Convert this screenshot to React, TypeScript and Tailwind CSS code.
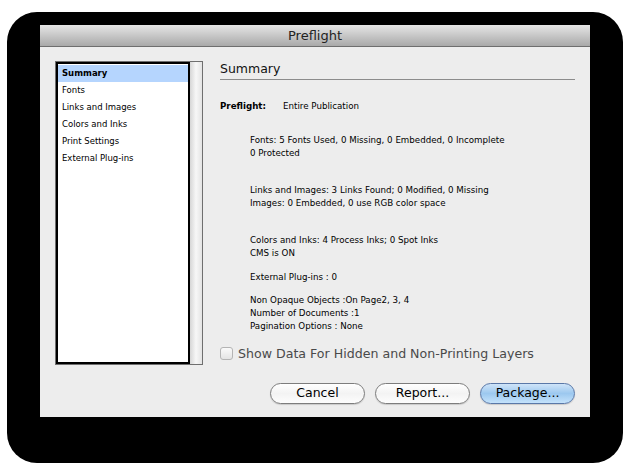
import React from 'react';

const listItems = ['Summary', 'Fonts', 'Links and Images', 'Colors and Inks', 'Print Settings', 'External Plug-ins'];

const font = { fontFamily: '"DejaVu Sans", "Liberation Sans", sans-serif' };

const Button: React.FC<{ label: string; primary?: boolean }> = ({ label, primary }) => (
  <button
    className={`w-[95px] h-[21px] rounded-full border text-[12.5px] leading-none text-black ${
      primary
        ? 'border-[#5a78a8] bg-gradient-to-b from-[#cfe4f8] via-[#9cc8ef] to-[#c4e2fb]'
        : 'border-[#7d7d7d] bg-gradient-to-b from-white via-[#f3f3f3] to-[#fdfdfd]'
    } shadow-[0_1px_1px_rgba(0,0,0,0.15)]`}
  >
    {label}
  </button>
);

export default function App() {
  return (
    <div className="w-[630px] h-[472px] bg-white pt-[12px] pl-[7px]" style={font}>
      <div className="w-[616px] h-[451px] rounded-[30px] bg-black pt-[13px] pl-[33px]">
        <div className="w-[550px] h-[392px] bg-[#ededed] flex flex-col">
          {/* title bar */}
          <div className="h-[22px] bg-gradient-to-b from-[#e6e6e6] to-[#a9a9a9] border-b border-[#6e6e6e] flex items-center justify-center text-[13px] text-[#222]">
            Preflight
          </div>

          <div className="flex pt-[14px] pl-[15px]">
            {/* list */}
            <div className="w-[148px] h-[304px] border border-[#6f6f6f] flex bg-white">
              <div className="w-[134px] h-full border-2 border-black bg-white flex flex-col pt-px">
                {listItems.map((item, i) => (
                  <div
                    key={item}
                    className={`h-[17px] pl-[4px] flex items-center text-[8.5px] text-black ${
                      i === 0 ? 'bg-[#b5d5fe] font-bold' : ''
                    }`}
                  >
                    {item}
                  </div>
                ))}
              </div>
              <div className="flex-1 bg-gradient-to-r from-[#d6d6d6] via-[#f7f7f7] to-[#e4e4e4]" />
            </div>

            {/* details */}
            <div className="ml-[17px] w-[355px] flex flex-col">
              <div className="text-[12.5px] text-[#111] leading-none pt-[2px] pb-[3px] border-b border-[#8c8c8c]">
                Summary
              </div>
              <div className="flex text-[8.7px] text-black mt-[20px]">
                <span className="font-bold w-[63px]">Preflight:</span>
                <span>Entire Publication</span>
              </div>
              <div className="pl-[30px] text-[8.7px] text-black leading-[13px]">
                <div className="mt-[21px]">
                  <div>Fonts: 5 Fonts Used, 0 Missing, 0 Embedded, 0 Incomplete</div>
                  <div>0 Protected</div>
                </div>
                <div className="mt-[24px]">
                  <div>Links and Images: 3 Links Found; 0 Modified, 0 Missing</div>
                  <div>Images: 0 Embedded, 0 use RGB color space</div>
                </div>
                <div className="mt-[24px]">
                  <div>Colors and Inks: 4 Process Inks; 0 Spot Inks</div>
                  <div>CMS is ON</div>
                </div>
                <div className="mt-[11px]">External Plug-ins : 0</div>
                <div className="mt-[10px]">
                  <div>Non Opaque Objects :On Page2, 3, 4</div>
                  <div>Number of Documents :1</div>
                  <div>Pagination Options : None</div>
                </div>
              </div>
              <div className="flex items-center mt-[12px]">
                <div className="w-[13px] h-[13px] rounded-[3px] border border-[#b4b4b4] bg-gradient-to-b from-[#fafafa] to-[#e4e4e4]" />
                <span className="ml-[5px] text-[12.6px] text-[#4a4a4a]">Show Data For Hidden and Non-Printing Layers</span>
              </div>
            </div>
          </div>

          {/* buttons */}
          <div className="flex justify-end gap-[10px] pr-[15px] mt-[18px]">
            <Button label="Cancel" />
            <Button label="Report..." />
            <Button label="Package..." primary />
          </div>
        </div>
      </div>
    </div>
  );
}
